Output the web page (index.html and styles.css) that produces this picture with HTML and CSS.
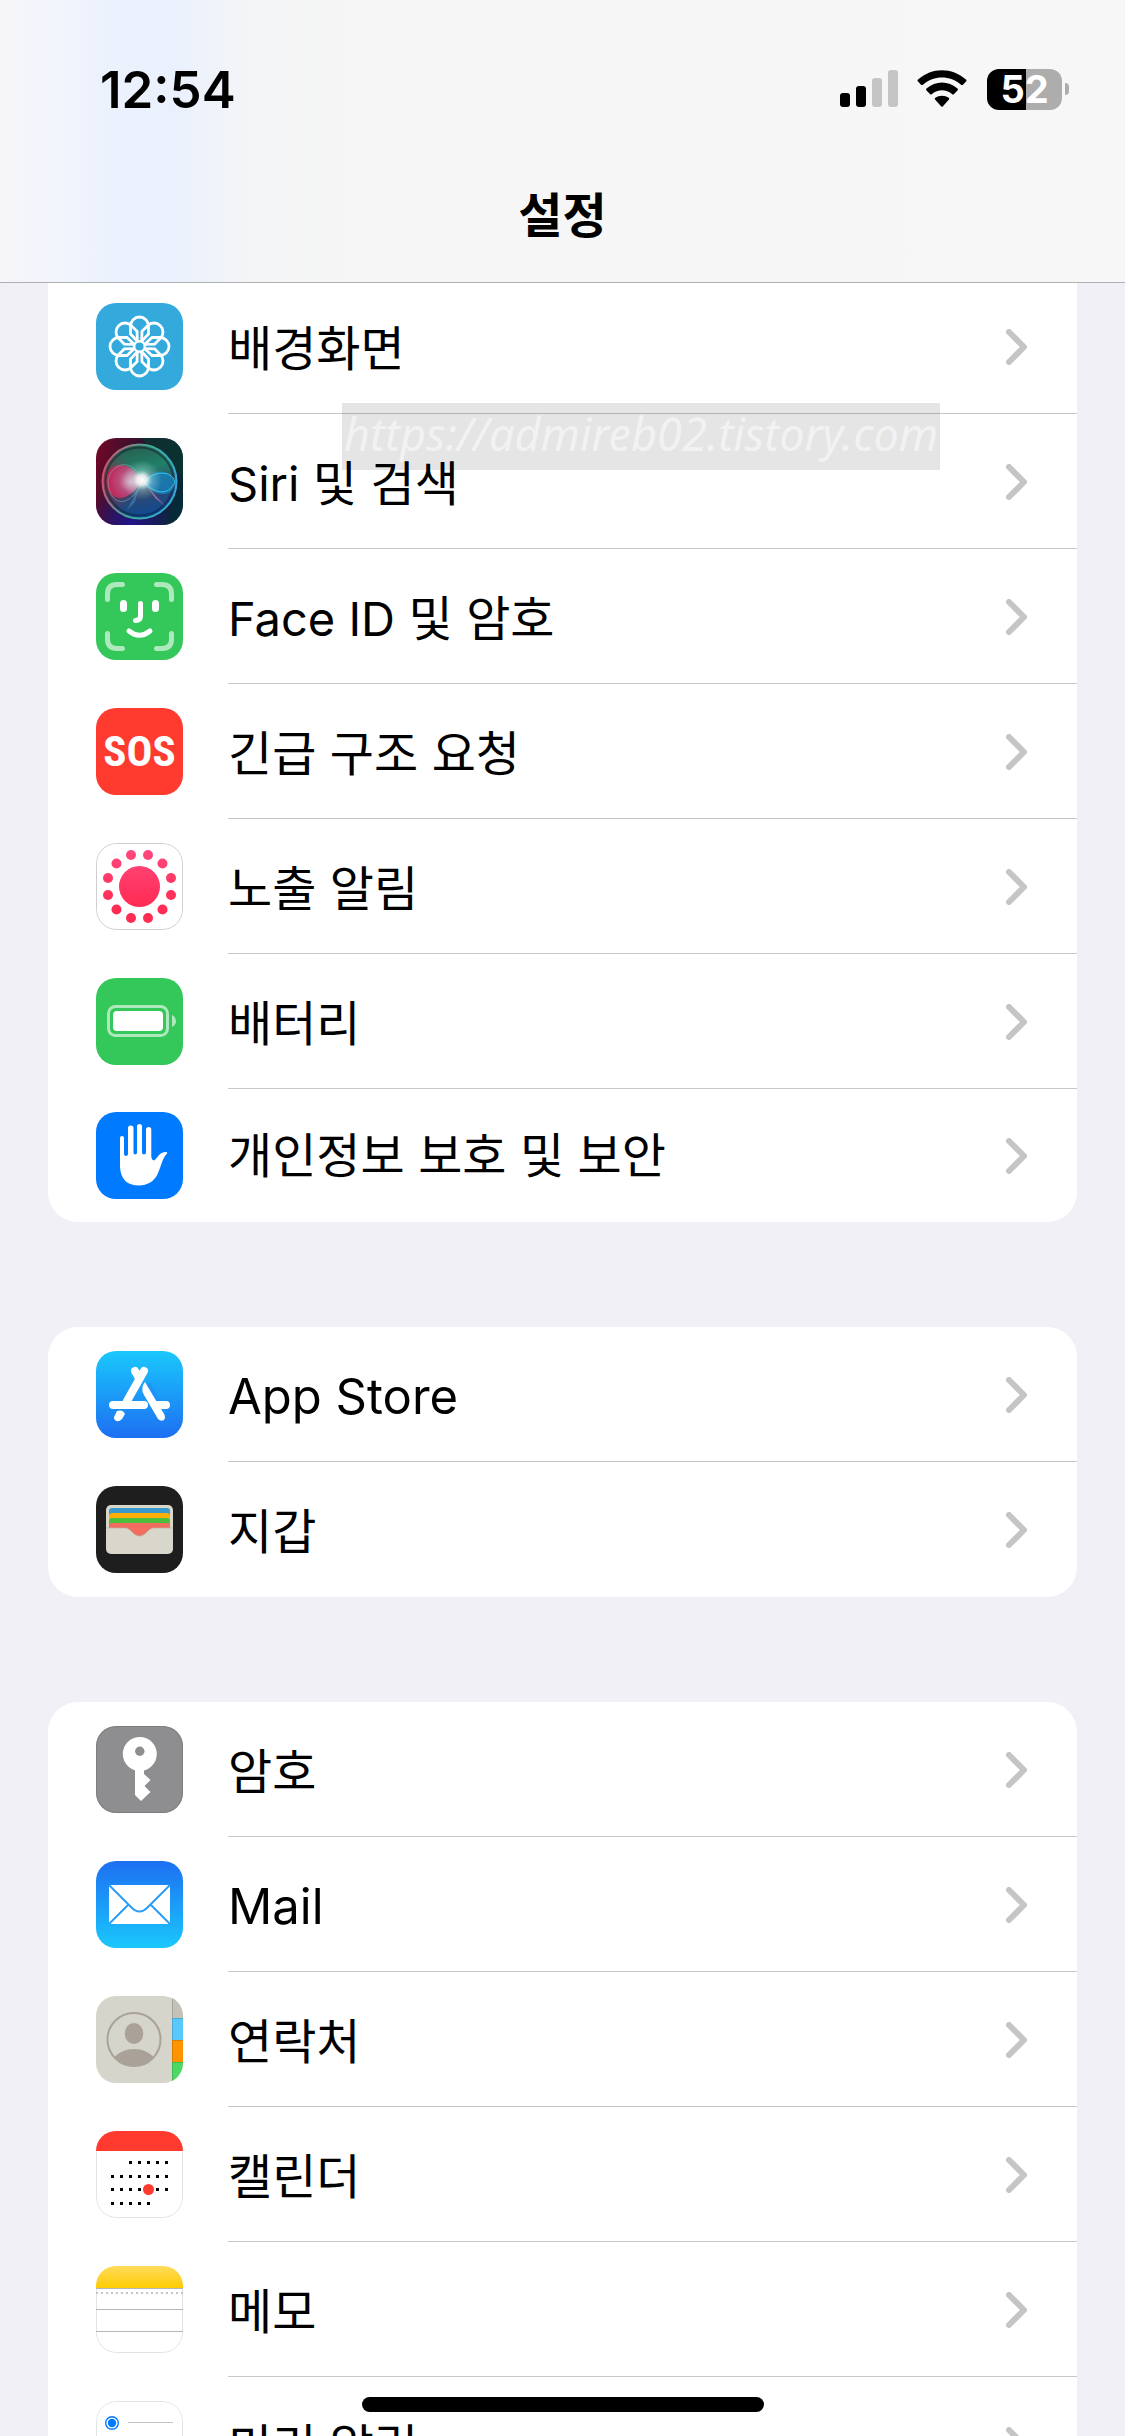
FILE: index.html
```html
<!DOCTYPE html>
<html lang="ko">

<head>
  <meta charset="UTF-8">
  <meta name="viewport" content="width=device-width, initial-scale=1.0">
  <title>설정</title>
  <link rel="stylesheet" href="styles.css">
</head>

<body>
  <header>
    <div class="status-bar">
      <time>12:54</time>
      <div class="status-icons">
        <svg class="signal" width="58" height="38" viewBox="0 0 58 38">
          <rect x="0" y="23" width="10" height="14" rx="3" />
          <rect x="16" y="16" width="10" height="21" rx="3" />
          <rect x="32" y="8" width="10" height="29" rx="3" fill="#c5c5c5" />
          <rect x="48" y="0" width="10" height="37" rx="3" fill="#c5c5c5" />
        </svg>
        <svg class="wifi" width="50" height="38" viewBox="0 0 50 38">
          <path d="M1 11.500 Q0 10.500 1 9.500 C15 -3 35 -3 49 9.500 Q50 10.500 49 11.500 L46 14.700 Q45 15.500 44 14.700 C33 5 17 5 6 14.700 Q5 15.500 4 14.700 Z" />
          <path d="M9.500 20.500 Q8.500 19.500 9.500 18.500 C18.500 10.500 31.500 10.500 40.500 18.500 Q41.500 19.500 40.500 20.500 L37 24 Q36 25 35 24 C29 19 21 19 15 24 Q14 25 13 24 Z" />
          <path d="M18 29.500 Q17.300 28.500 18.300 27.800 C22 25 28 25 31.700 27.800 Q32.700 28.500 32 29.500 L25.700 36.500 Q25 37.200 24.300 36.500 Z" />
        </svg>
        <div class="battery"><span class="battery-level">52</span><i class="battery-cap"></i></div>
      </div>
    </div>
    <h1>설정</h1>
  </header>

  <main>
    <ul class="group">
      <li><a class="row" href="#">
        <svg class="icon" viewBox="0 0 87 87">
          <rect width="87" height="87" fill="#34aadc" />
          <defs>
            <path id="petal" d="M42 39 L34.500 31 V23 a9 9 0 0 1 18 0 V31 L45 39" fill="none" stroke="#fff" stroke-width="2.800" />
          </defs>
          <use href="#petal" />
          <use href="#petal" transform="rotate(45 43.500 43.500)" />
          <use href="#petal" transform="rotate(90 43.500 43.500)" />
          <use href="#petal" transform="rotate(135 43.500 43.500)" />
          <use href="#petal" transform="rotate(180 43.500 43.500)" />
          <use href="#petal" transform="rotate(225 43.500 43.500)" />
          <use href="#petal" transform="rotate(270 43.500 43.500)" />
          <use href="#petal" transform="rotate(315 43.500 43.500)" />
          <circle cx="43.500" cy="43.500" r="5.300" fill="#34aadc" stroke="#fff" stroke-width="2.400" />
        </svg>
        <span class="label">배경화면</span>
        <svg class="chevron" viewBox="0 0 21 36"><path d="M3 3 L18 18 L3 33" /></svg>
      </a></li>
      <li><a class="row" href="#">
        <svg class="icon" viewBox="0 0 87 87">
          <defs>
            <linearGradient id="siri-bg" x1="0" y1="0.300" x2="1" y2="0.600">
              <stop offset="0" stop-color="#6b0828" />
              <stop offset="0.450" stop-color="#2a1330" />
              <stop offset="1" stop-color="#062a38" />
            </linearGradient>
            <linearGradient id="siri-ball" x1="0.350" y1="0" x2="0.600" y2="1">
              <stop offset="0" stop-color="#2b5b4c" />
              <stop offset="0.350" stop-color="#1f8068" />
              <stop offset="0.650" stop-color="#32476a" />
              <stop offset="1" stop-color="#0a4b9a" />
            </linearGradient>
            <linearGradient id="siri-rim" x1="0" y1="0.300" x2="1" y2="0.600">
              <stop offset="0" stop-color="#d0516d" />
              <stop offset="0.500" stop-color="#3fae95" />
              <stop offset="1" stop-color="#35a8dc" />
            </linearGradient>
            <radialGradient id="siri-pink" cx="0.700" cy="0.500" r="0.700">
              <stop offset="0" stop-color="#f7b6d0" />
              <stop offset="0.500" stop-color="#c94b80" />
              <stop offset="1" stop-color="#d01b50" />
            </radialGradient>
            <radialGradient id="siri-glow">
              <stop offset="0" stop-color="#fff" />
              <stop offset="0.250" stop-color="#fff" stop-opacity="0.850" />
              <stop offset="0.500" stop-color="#c9f7f1" stop-opacity="0.350" />
              <stop offset="1" stop-color="#b0e8e8" stop-opacity="0" />
            </radialGradient>
            <radialGradient id="siri-corner" cx="0.400" cy="1" r="0.500">
              <stop offset="0" stop-color="#22148c" />
              <stop offset="1" stop-color="#22148c" stop-opacity="0" />
            </radialGradient>
            <radialGradient id="siri-left" cx="0" cy="0.500" r="0.450">
              <stop offset="0" stop-color="#c01342" stop-opacity="0.700" />
              <stop offset="1" stop-color="#c01342" stop-opacity="0" />
            </radialGradient>
          </defs>
          <rect width="87" height="87" fill="url(#siri-bg)" />
          <path d="M45 0 H87 V40 Z" fill="#07382f" opacity="0.700" />
          <rect width="87" height="87" fill="url(#siri-corner)" />
          <circle cx="43.500" cy="43.500" r="37" fill="url(#siri-ball)" />
          <circle cx="43.500" cy="43.500" r="37" fill="url(#siri-left)" stroke="url(#siri-rim)" stroke-width="2" />
          <circle cx="43.500" cy="43.500" r="34" fill="none" stroke="#0b1c30" stroke-width="2" opacity="0.500" />
          <path d="M45 44 C39 24 14 21 11 39 C7 61 30 70 45 44 Z" fill="url(#siri-pink)" opacity="0.850" />
          <path d="M46 44 C35 14 12 29 12 44 C14 68 33 72 46 44 Z" fill="none" stroke="#73c7ce" opacity="0.500" />
          <path d="M48 45 C56 28 76 32 79 44 C78 61 58 59 48 45 Z" fill="#1781bb" opacity="0.800" />
          <path d="M48 45 C57 32 76 32 79 44 C73 57 61 57 48 45 Z" fill="none" stroke="#33c6e6" />
          <path d="M50 47 L69 68 L59 60 Z" fill="#d77fb2" opacity="0.600" />
          <path d="M43 49 L31 72 L39 64 Z" fill="#53a8ec" opacity="0.400" />
          <circle cx="46" cy="42" r="20" fill="url(#siri-glow)" />
        </svg>
        <span class="label"><span class="latin">Siri</span> 및 검색</span>
        <svg class="chevron" viewBox="0 0 21 36"><path d="M3 3 L18 18 L3 33" /></svg>
      </a></li>
      <li><a class="row" href="#">
        <svg class="icon" viewBox="0 0 87 87">
          <rect width="87" height="87" fill="#34c759" />
          <g fill="none" stroke="#fff" stroke-linecap="round">
            <path d="M11.500 26.500 V21 Q11.500 11.500 21 11.500 H26.500 M60.500 11.500 H66 Q75.500 11.500 75.500 21 V26.500 M75.500 60.500 V66 Q75.500 75.500 66 75.500 H60.500 M26.500 75.500 H21 Q11.500 75.500 11.500 66 V60.500" stroke-width="5" opacity="0.600" />
            <path d="M27.500 30.500 V35.500 M59.500 30.500 V35.500" stroke-width="7" />
            <path d="M44.500 30.500 V43 Q44.500 47.500 39.500 47.500" stroke-width="5" />
            <path d="M33 58 Q43.500 66.500 54 58" stroke-width="5" />
          </g>
        </svg>
        <span class="label"><span class="latin">Face ID</span> 및 암호</span>
        <svg class="chevron" viewBox="0 0 21 36"><path d="M3 3 L18 18 L3 33" /></svg>
      </a></li>
      <li><a class="row" href="#">
        <span class="icon sos">SOS</span>
        <span class="label">긴급 구조 요청</span>
        <svg class="chevron" viewBox="0 0 21 36"><path d="M3 3 L18 18 L3 33" /></svg>
      </a></li>
      <li><a class="row" href="#">
        <svg class="icon" viewBox="0 0 87 87">
          <defs>
            <linearGradient id="exposure" gradientUnits="userSpaceOnUse" x1="0" y1="5" x2="0" y2="60">
              <stop offset="0" stop-color="#ff4a80" />
              <stop offset="1" stop-color="#ff2d55" />
            </linearGradient>
          </defs>
          <rect class="outline dark" x="0.500" y="0.500" width="86" height="86" rx="20" />
          <g fill="url(#exposure)">
            <circle cx="43.500" cy="43.500" r="20.500" />
            <circle cx="35" cy="12" r="5" />
            <circle cx="52" cy="12" r="5" />
            <circle cx="66.500" cy="20.500" r="5" />
            <circle cx="75" cy="35" r="5" />
            <circle cx="75" cy="52" r="5" />
            <circle cx="66.500" cy="66.500" r="5" />
            <circle cx="52" cy="75" r="5" />
            <circle cx="35" cy="75" r="5" />
            <circle cx="20.500" cy="66.500" r="5" />
            <circle cx="12" cy="52" r="5" />
            <circle cx="12" cy="35" r="5" />
            <circle cx="20.500" cy="20.500" r="5" />
          </g>
        </svg>
        <span class="label">노출 알림</span>
        <svg class="chevron" viewBox="0 0 21 36"><path d="M3 3 L18 18 L3 33" /></svg>
      </a></li>
      <li><a class="row" href="#">
        <svg class="icon" viewBox="0 0 87 87">
          <rect width="87" height="87" fill="#34c759" />
          <rect x="12.500" y="28.500" width="59" height="29" rx="7" fill="none" stroke="#fff" stroke-width="3" opacity="0.600" />
          <rect x="17" y="33" width="50" height="20" rx="4" fill="#fff" />
          <path d="M76 37 Q80 39 80 43 Q80 47 76 49 Z" fill="#fff" opacity="0.600" />
        </svg>
        <span class="label">배터리</span>
        <svg class="chevron" viewBox="0 0 21 36"><path d="M3 3 L18 18 L3 33" /></svg>
      </a></li>
      <li><a class="row short" href="#">
        <svg class="icon" viewBox="0 0 87 87">
          <rect width="87" height="87" fill="#007aff" />
          <path d="M24 55 V26 Q24 24 26 24 Q28 24 28 26 V42 Q28 44 30 44 Q32 44 32 42 V16 Q32 13.500 34.700 13.500 Q37.500 13.500 37.500 16 V40.500 Q37.500 42.500 39.300 42.500 Q41 42.500 41 40.500 V14.500 Q41 12 43.500 12 Q46 12 46 14.500 V40.500 Q46 42.500 48 42.500 Q50 42.500 50 40.500 V17.500 Q50 15 52.700 15 Q55.300 15 55.300 17.500 V44 Q55.500 48 58 48.500 C61 47 63 40 70 40 Q72 40 71 41.500 C65 48 65 57 60 65 Q54 73.500 43 73.500 Q25 73.500 24 55 Z" fill="#fff" />
        </svg>
        <span class="label">개인정보 보호 및 보안</span>
        <svg class="chevron" viewBox="0 0 21 36"><path d="M3 3 L18 18 L3 33" /></svg>
      </a></li>
    </ul>

    <ul class="group">
      <li><a class="row" href="#">
        <svg class="icon" viewBox="0 0 87 87">
          <defs>
            <linearGradient id="store-bg" x1="0" y1="0" x2="0" y2="1">
              <stop offset="0" stop-color="#1ac8fc" />
              <stop offset="1" stop-color="#1d6ff2" />
            </linearGradient>
          </defs>
          <rect width="87" height="87" fill="url(#store-bg)" />
          <g fill="none" stroke="#fff" stroke-width="8" stroke-linecap="round">
            <path d="M48 20 L31 50" />
            <path d="M39 20 L43 27" />
            <path d="M17 54 H48 M62 54 H70" />
          </g>
          <path d="M21 60 Q27 58 29 63 L26 68 Q22 72 19 69 Q17 67 19 64 Z" fill="#fff" />
          <path d="M49.500 34 L67 64" fill="none" stroke="#1c93f8" stroke-width="10" />
          <path d="M49 31 Q44 37 48 44 L62 68 Q65 71 68 69 Q70 66 68 63 Z" fill="#fff" />
          <path d="M60 50 H70 V58 H64 Z" fill="#fff" />
        </svg>
        <span class="label latin">App Store</span>
        <svg class="chevron" viewBox="0 0 21 36"><path d="M3 3 L18 18 L3 33" /></svg>
      </a></li>
      <li><a class="row" href="#">
        <svg class="icon" viewBox="0 0 87 87">
          <rect width="87" height="87" fill="#1e1e1e" />
          <rect x="10" y="19" width="67" height="49" rx="5" fill="#d9d6cc" />
          <path d="M13 42 V25 Q13 22 16 22 H71 Q74 22 74 25 V42 Z" fill="#3c99cd" />
          <path d="M13 42 V30 Q13 27 16 27 H71 Q74 27 74 30 V42 Z" fill="#ffae03" />
          <path d="M13 42 V35 Q13 32 16 32 H71 Q74 32 74 35 V42 Z" fill="#50be3d" />
          <path d="M13 42 V40 Q13 37 16 37 H71 Q74 37 74 40 V42 H58 C52 42 50 50 43.500 50 C37 50 35 42 29 42 Z" fill="#f26d5f" />
          <path d="M10 42 H29 C35 42 37 50 43.500 50 C50 50 52 42 58 42 H77" fill="none" stroke="#b9b5a9" stroke-width="0.700" />
        </svg>
        <span class="label">지갑</span>
        <svg class="chevron" viewBox="0 0 21 36"><path d="M3 3 L18 18 L3 33" /></svg>
      </a></li>
    </ul>

    <ul class="group">
      <li><a class="row" href="#">
        <svg class="icon" viewBox="0 0 87 87">
          <rect width="87" height="87" fill="#8e8e90" />
          <rect x="0.500" y="0.500" width="86" height="86" rx="20" fill="none" stroke="#7d7d7f" />
          <circle cx="43.800" cy="28" r="17" fill="#fff" />
          <path d="M39 43 V69 L45 75 L54.500 66 L48.500 60 L54.500 54 L48 48 V43 Z" fill="#fff" />
          <circle cx="43.800" cy="25.300" r="4.700" fill="#8e8e90" />
        </svg>
        <span class="label">암호</span>
        <svg class="chevron" viewBox="0 0 21 36"><path d="M3 3 L18 18 L3 33" /></svg>
      </a></li>
      <li><a class="row" href="#">
        <svg class="icon" viewBox="0 0 87 87">
          <defs>
            <linearGradient id="mail-bg" x1="0" y1="0" x2="0" y2="1">
              <stop offset="0" stop-color="#1d6ff2" />
              <stop offset="1" stop-color="#1ac8fc" />
            </linearGradient>
          </defs>
          <rect width="87" height="87" fill="url(#mail-bg)" />
          <rect x="13" y="24" width="61" height="39" rx="2" fill="#fff" />
          <path d="M13 24 L35 46 Q43.500 55 52 46 L74 24 M13 63 L32.500 43.500 M74 63 L54.500 43.500" fill="none" stroke="#2a9df8" stroke-width="2" />
        </svg>
        <span class="label latin">Mail</span>
        <svg class="chevron" viewBox="0 0 21 36"><path d="M3 3 L18 18 L3 33" /></svg>
      </a></li>
      <li><a class="row" href="#">
        <svg class="icon" viewBox="0 0 87 87">
          <defs>
            <clipPath id="avatar"><circle cx="38" cy="43.500" r="27" /></clipPath>
          </defs>
          <rect width="87" height="87" fill="#d6d5cb" />
          <rect x="76" width="11" height="22" fill="#c3c1b8" />
          <rect x="76" y="22" width="11" height="22" fill="#5ac8fa" />
          <rect x="76" y="44" width="11" height="22" fill="#ff9500" />
          <rect x="76" y="66" width="11" height="21" fill="#4cd964" />
          <path d="M76 22.500 H87 M76 44.500 H87 M76 66.500 H87 M76.500 0 V87" stroke="#000" opacity="0.150" />
          <circle cx="38" cy="43.500" r="26.500" fill="none" stroke="#aaa299" stroke-width="2" />
          <g fill="#aaa299" clip-path="url(#avatar)">
            <ellipse cx="38" cy="37.500" rx="9.300" ry="10.500" />
            <path d="M17 63 C22 56 30 53 38 53 C46 53 54 56 59 63 L50 75 H26 Z" />
          </g>
        </svg>
        <span class="label">연락처</span>
        <svg class="chevron" viewBox="0 0 21 36"><path d="M3 3 L18 18 L3 33" /></svg>
      </a></li>
      <li><a class="row" href="#">
        <svg class="icon" viewBox="0 0 87 87">
          <rect class="outline" x="0.500" y="0.500" width="86" height="86" rx="20" />
          <rect width="87" height="20" fill="#ff3b30" />
          <path d="M33 31.500 H73 M15 45.500 H73 M15 58.500 H73 M15 72.500 H55" fill="none" stroke="#000" stroke-width="3" stroke-dasharray="3 6" />
          <circle cx="52.500" cy="58.500" r="5.500" fill="#ff3b30" />
        </svg>
        <span class="label">캘린더</span>
        <svg class="chevron" viewBox="0 0 21 36"><path d="M3 3 L18 18 L3 33" /></svg>
      </a></li>
      <li><a class="row" href="#">
        <svg class="icon" viewBox="0 0 87 87">
          <defs>
            <linearGradient id="notes-top" x1="0" y1="0" x2="0" y2="1">
              <stop offset="0" stop-color="#ffdc5c" />
              <stop offset="1" stop-color="#ffcc02" />
            </linearGradient>
          </defs>
          <rect class="outline" x="0.500" y="0.500" width="86" height="86" rx="20" />
          <rect width="87" height="22" fill="url(#notes-top)" />
          <path d="M0 22.500 H87 M0 43.500 H87 M0 65.500 H87" stroke="#b5b5b5" />
          <path d="M0 27 H87" stroke="#c4c4c4" stroke-width="2" stroke-dasharray="2 3" />
        </svg>
        <span class="label">메모</span>
        <svg class="chevron" viewBox="0 0 21 36"><path d="M3 3 L18 18 L3 33" /></svg>
      </a></li>
      <li><a class="row" href="#">
        <svg class="icon" viewBox="0 0 87 87">
          <rect class="outline" x="0.500" y="0.500" width="86" height="86" rx="20" />
          <circle cx="16" cy="22" r="6.300" fill="none" stroke="#007aff" stroke-width="1.400" />
          <circle cx="16" cy="22" r="4.200" fill="#007aff" />
          <path d="M32 21.500 H77" stroke="#c5c5c5" />
        </svg>
        <span class="label">미리 알림</span>
        <svg class="chevron" viewBox="0 0 21 36"><path d="M3 3 L18 18 L3 33" /></svg>
      </a></li>
    </ul>
  </main>

  <div class="watermark">https://admireb02.tistory.com</div>
  <div class="home-indicator"></div>
</body>

</html>
```
FILE: styles.css
```css
* {
  box-sizing: border-box;
}

body {
  margin: 0;
  height: 100vh;
  overflow: hidden;
  background-color: #f1f0f6;
  color: black;
  font-family: "Inter", "Noto Sans CJK KR", sans-serif;
}

/* 상단 바 */
header {
  position: fixed;
  top: 0;
  left: 0;
  right: 0;
  z-index: 1;
  height: 283px;
  border-bottom: 1px solid #b0b0b3;
  background: linear-gradient(to right, #f6f6f9 0, #f1f5fc 60px, #ebf1fd 110px, #ebf1fc 180px, #f4f5f6 260px, #f6f6f6 400px, #f7f7f7 100%);
}

.status-bar {
  display: flex;
  align-items: center;
  justify-content: space-between;
  height: 178px;
  padding: 0 56px 0 100px;
}

time {
  font-size: 51px;
  font-weight: 600;
}

.status-icons {
  display: flex;
  align-items: center;
}

.wifi {
  margin: 0 20px 0 19px;
}

.battery {
  display: flex;
  align-items: center;
  gap: 3px;
}

.battery-level {
  width: 75px;
  height: 41px;
  border-radius: 12px;
  background: linear-gradient(to right, black 52%, #adadad 52%);
  color: white;
  font-size: 38px;
  font-weight: 700;
  line-height: 41px;
  text-align: center;
}

.battery-cap {
  width: 4px;
  height: 12px;
  border-radius: 0 4px 4px 0;
  background-color: #adadad;
}

h1 {
  margin: 0;
  font-size: 48px;
  font-weight: 700;
  line-height: 76px;
  text-align: center;
}

/* 설정 목록 */
main {
  display: flex;
  flex-direction: column;
  gap: 105px;
  padding: 279px 48px 0;
}

.group {
  margin: 0;
  padding: 0;
  list-style: none;
  border-radius: 30px;
  background-color: white;
}

/* 스크롤되어 상단 바 아래로 이어지는 그룹 */
.group:first-child {
  border-radius: 0 0 30px 30px;
}

.row {
  display: grid;
  grid-template-columns: 87px 1fr 21px;
  column-gap: 45px;
  align-items: center;
  height: 135px;
  padding: 0 50px 0 48px;
  background: linear-gradient(#c8c8ca, #c8c8ca) right bottom / calc(100% - 180px) 1px no-repeat;
  color: inherit;
  text-decoration: none;
}

li:last-child .row {
  background: none;
}

.row.short {
  height: 133px;
}

.icon {
  display: block;
  width: 87px;
  height: 87px;
  border-radius: 20px;
  overflow: hidden;
}

.outline {
  fill: white;
  stroke: #e3e3e3;
}

.outline.dark {
  stroke: #cfcfcf;
}

.sos {
  background-color: #ff3b30;
  color: white;
  font-family: "Liberation Sans Narrow", "Roboto Condensed", "Liberation Sans", sans-serif;
  font-size: 43px;
  font-weight: 700;
  line-height: 87px;
  text-align: center;
}

.label {
  padding-top: 4px;
  font-size: 48px;
  line-height: 72px;
  white-space: nowrap;
}

.short .label {
  padding-top: 0;
}

.latin {
  font-size: 49px;
}

.label > .latin {
  font-size: 47px;
}

.chevron {
  width: 21px;
  height: 36px;
  fill: none;
  stroke: #c5c5c7;
  stroke-width: 6;
  stroke-linecap: round;
  stroke-linejoin: round;
}

/* 화면 위에 겹치는 요소 */
.watermark {
  position: absolute;
  top: 403px;
  left: 342px;
  padding: 0 2px 6px;
  background-color: rgba(0, 0, 0, 0.1);
  color: rgba(255, 255, 255, 0.5);
  font-family: "Noto Sans", sans-serif;
  font-size: 45px;
  font-style: italic;
  line-height: 61px;
}

.home-indicator {
  position: fixed;
  bottom: 24px;
  left: 50%;
  width: 402px;
  height: 15px;
  border-radius: 8px;
  background-color: black;
  transform: translateX(-50%);
}
```
